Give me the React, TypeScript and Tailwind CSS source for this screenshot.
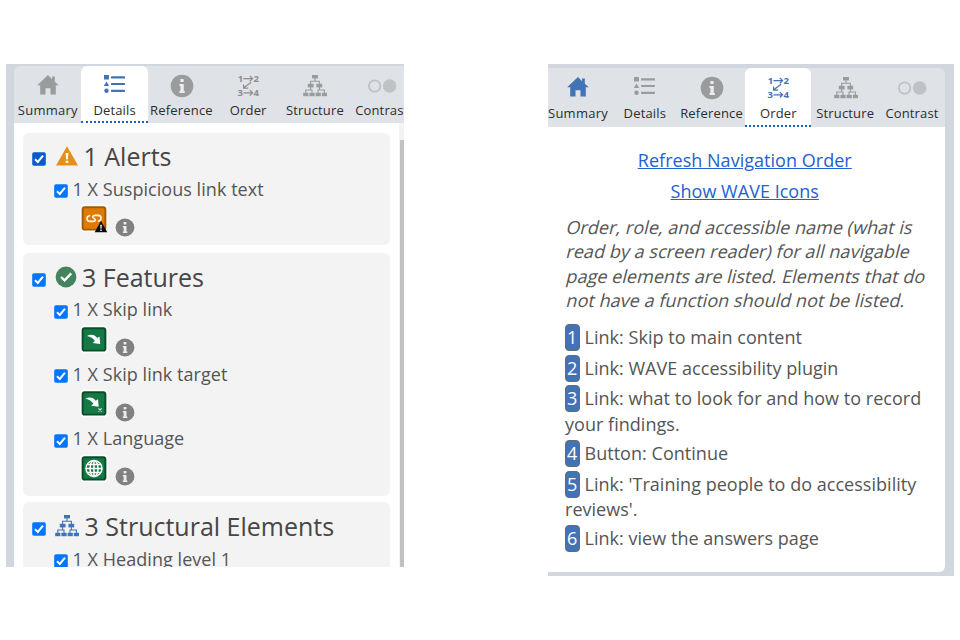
import React from "react";

type TabName = "Summary" | "Details" | "Reference" | "Order" | "Structure" | "Contrast";

function HomeIcon() {
  return (
    <svg width="24" height="24" viewBox="0 0 24 24" fill="currentColor">
      <path d="M12 1 1.2 11.3h3V20.5h5.3v-6.2h5v6.2h5.3v-9.2h3L18.8 7.7V2.6h-2.7v2.6z" />
    </svg>
  );
}

function DetailsIcon() {
  return (
    <svg width="24" height="24" viewBox="0 0 24 24" fill="currentColor">
      <rect x="1" y="1" width="4.9" height="4.5" />
      <path d="M3.5 7.500 6.200 12H.8z" />
      <circle cx="3.5" cy="16.7" r="2.2" />
      <rect x="8" y="2.3" width="14" height="2.2" rx=".6" />
      <rect x="8" y="8.9" width="14" height="2.2" rx=".6" />
      <rect x="8" y="15.7" width="14" height="2.2" rx=".6" />
    </svg>
  );
}

function InfoIcon({ className = "", w = 24, h = 24 }: { className?: string; w?: number; h?: number }) {
  return (
    <svg className={className} width={w} height={h} viewBox="0 0 24 24" preserveAspectRatio="none">
      <circle cx="12" cy="12" r="11.3" fill="currentColor" />
      <g fill="#ececec">
        <rect x="10.3" y="5" width="3.4" height="3.1" rx=".8" />
        <path d="M9.4 10h4.4v7h1v1.9H9.4V17h1v-5.1h-1z" />
      </g>
    </svg>
  );
}

function OrderIcon() {
  return (
    <svg width="24" height="24" viewBox="0 0 24 24" className="overflow-visible">
      <g fill="currentColor" className="font-['Open_Sans'] text-[9.5px] font-bold">
        <text x="0.8" y="8">1</text>
        <text x="16.4" y="8">2</text>
        <text x="0.6" y="22.2">3</text>
        <text x="16.4" y="22.2">4</text>
      </g>
      <g fill="none" stroke="currentColor" strokeWidth="1.2">
        <path d="M6.400 4.600h9M12.800 1.900l2.800 2.700-2.800 2.700M6.400 18.800h9M12.800 16.100l2.800 2.700-2.800 2.700M14.200 8.200 6.400 14M6.600 10.400v3.800h4.600" />
      </g>
    </svg>
  );
}

function StructureIcon() {
  return (
    <svg width="24" height="24" viewBox="0 0 24 24" fill="currentColor">
      <rect x="9" y="1" width="6" height="3.4" />
      <rect x="4.8" y="9.8" width="5.8" height="3.6" />
      <rect x="13.4" y="9.8" width="5.8" height="3.6" />
      <rect x="0.2" y="18.8" width="5.2" height="3.4" />
      <rect x="6.4" y="18.8" width="5.2" height="3.4" />
      <rect x="12.6" y="18.8" width="5.2" height="3.4" />
      <rect x="18.8" y="18.8" width="5.2" height="3.4" />
      <path
        d="M12 4v3.2M7.6 10V7.2h8.8V10M7.6 13v3M2.8 19v-3H9v3M16.4 13v3M15 19v-3h6.4v3"
        fill="none"
        stroke="currentColor"
        strokeWidth="1.1"
      />
    </svg>
  );
}

function ContrastIcon() {
  return (
    <svg width="30" height="24" viewBox="0 0 30 24">
      <circle cx="7.6" cy="12" r="5.7" fill="none" stroke="currentColor" strokeWidth="1.7" />
      <circle cx="22.6" cy="12" r="6.7" fill="currentColor" />
    </svg>
  );
}

const TABS: { name: TabName; icon: React.ReactNode; tone: string; track: string }[] = [
  { name: "Summary", icon: <HomeIcon />, tone: "text-[#999b9d]", track: "tracking-[0.25px]" },
  { name: "Details", icon: <DetailsIcon />, tone: "text-[#999b9d]", track: "tracking-[0.15px]" },
  { name: "Reference", icon: <InfoIcon />, tone: "text-[#999b9d]", track: "tracking-[0.2px]" },
  { name: "Order", icon: <OrderIcon />, tone: "text-[#8b8d90]", track: "tracking-[0.15px]" },
  { name: "Structure", icon: <StructureIcon />, tone: "text-[#999b9d]", track: "tracking-[0.15px]" },
  { name: "Contrast", icon: <ContrastIcon />, tone: "text-[#bfc1c4]", track: "tracking-[0.15px]" },
];

function TabBar({ active, blue, className, labelGap }: { active: TabName; blue: TabName[]; className: string; labelGap: string }) {
  return (
    <nav className={`flex shrink-0 bg-[#dfe2e7] ${className}`}>
      {TABS.map((t) => (
        <div
          key={t.name}
          className={`flex w-[66.8px] shrink-0 flex-col items-center border-b-2 pt-2 ${
            t.name === active ? "rounded-t-md border-dotted border-[#1a5fc4] bg-white" : "border-transparent"
          }`}
        >
          <span className={`pl-[1.6px] ${blue.includes(t.name) ? "text-[#4173b5]" : t.tone}`}>{t.icon}</span>
          <span className={`pl-[0.8px] text-[13px] leading-[18px] whitespace-nowrap text-[#2d2d2d] ${labelGap} ${t.track}`}>
            {t.name}
          </span>
        </div>
      ))}
    </nav>
  );
}

function Check({ dark = false }: { dark?: boolean }) {
  return (
    <svg width="14" height="14" viewBox="0 0 14 14" className="shrink-0">
      <rect x=".2" y=".2" width="13.600" height="13.600" rx="1.800" fill={dark ? "#0a5bc8" : "#0075ff"} />
      <path d="M3 7.3 5.8 10 11 3.6" fill="none" stroke="#fff" strokeWidth="2" />
    </svg>
  );
}

function Heading({ icon, text, dark, gap }: { icon: React.ReactNode; text: string; dark?: boolean; gap: string }) {
  return (
    <div className="flex h-9 items-center pl-[8.5px]">
      <span className="mt-1.5">
        <Check dark={dark} />
      </span>
      <span className="ml-[9.5px] shrink-0">{icon}</span>
      <h2 className={`text-[25px] leading-9 whitespace-nowrap text-[#464646] ${gap}`}>{text}</h2>
    </div>
  );
}

function Item({ text, icon }: { text: string; icon?: React.ReactNode }) {
  return (
    <div>
      <div className="flex h-[30px] items-center pl-[31px]">
        <span className="mt-1">
          <Check />
        </span>
        <span className="ml-[4.5px] text-[18px] leading-[29px] tracking-[0.05px] whitespace-nowrap text-[#555]">{text}</span>
      </div>
      {icon && (
        <div className="flex h-[34.5px] items-start pl-[57px]">
          {icon}
          <InfoIcon className="mt-[13.5px] ml-[6.5px] text-[#808080]" w={20} h={19} />
        </div>
      )}
    </div>
  );
}

function Tile({ fill, edge, children }: { fill: string; edge: string; children: React.ReactNode }) {
  return (
    <svg width="28" height="30" viewBox="0 0 28 30">
      <rect x="0.5" y="0.6" width="27" height="27.600" rx="4" fill="#fff" opacity=".9" />
      <rect x="2.6" y="3.2" width="22.8" height="22.4" rx="2.2" fill={fill} stroke={edge} strokeWidth="1.9" />
      {children}
    </svg>
  );
}

const arrow = "M7 11c3.400-2.300 8-1.600 10.300 2l2.200-1.600.7 7.600-7.600-1 2.300-2c-1.600-2.600-4.400-4.200-7.900-5z";

const LinkTile = (
  <Tile fill="#df7b04" edge="#a35a07">
    <g fill="none" stroke="#fff5e6" strokeWidth="1.6" strokeLinecap="round">
      <path d="M18 11.400h-2.800c-2.800 0-3.400 1.800-1.200 3s1.600 3-1.200 3H10c-4 0-4-5.200-.4-5.700" />
      <path d="M18 11.400c4 0 4 5.200.4 5.700" />
    </g>
    <path d="M21 16.800 27.300 28.300H14.700z" fill="#0b0b0b" />
    <path d="M20.200 20.800h1.600l-.3 4h-1zM20.300 25.600h1.400v1.400h-1.400z" fill="#fff" />
  </Tile>
);
const SkipTile = (
  <Tile fill="#157946" edge="#054f28">
    <path d={arrow} fill="#fff" />
  </Tile>
);
const TargetTile = (
  <Tile fill="#157946" edge="#054f28">
    <path d={arrow} fill="#fff" transform="translate(-1.5 -1.2)" />
    <path d="m18.500 19.400 3.200 3.200m0-3.200-3.200 3.200" stroke="#d5ebdf" strokeWidth="1.1" />
  </Tile>
);
const GlobeTile = (
  <Tile fill="#157946" edge="#054f28">
    <g fill="none" stroke="#fff" strokeWidth="1.5">
      <circle cx="14" cy="14.400" r="8" />
      <ellipse cx="14" cy="14.400" rx="4" ry="8" />
      <path d="M14 6.400v16M6 14.400h16M7.200 10.400h13.600M7.200 18.400h13.600" />
    </g>
  </Tile>
);

function LeftPanel() {
  return (
    <section className="mt-16 ml-1.5 flex h-[503px] w-[398px] flex-col overflow-hidden border-t-2 border-l-8 border-[#d2d7df] bg-white">
      <div className="bg-[#d2d7df]">
        <TabBar active="Details" blue={["Details"]} labelGap="mt-[3px]" className="h-[57px] w-[402px] rounded-tl-md" />
      </div>
      <div className="flex min-h-0 flex-1 justify-between">
        <div className="flex w-[366px] flex-col pt-[10px] pl-[9px]">
          <div className="h-[112px] w-[366.5px] shrink-0 rounded-md bg-[#f3f3f3] pt-[5px]">
            <Heading
              dark
              text="1 Alerts"
              gap="ml-[4.5px]"
              icon={
                <svg width="24" height="22" viewBox="0 0 24 22">
                  <path d="M12 1.300 23 20.500H1z" fill="#e58e1a" />
                  <path d="M10.600 8h2.800l-.6 6.500h-1.600zM10.700 15.800h2.600v2.300h-2.600z" fill="#fff" />
                </svg>
              }
            />
            <Item text="1 X Suspicious link text" icon={LinkTile} />
          </div>
          <div className="mt-[7.5px] h-[243px] w-[366.5px] shrink-0 rounded-md bg-[#f3f3f3] pt-[6px]">
            <Heading
              text="3 Features"
              gap="ml-[5px]"
              icon={
                <svg width="22" height="22" viewBox="0 0 22 22">
                  <circle cx="11" cy="11" r="10.400" fill="#43845f" />
                  <path d="m6 11 3.600 3.400 6.600-7" fill="none" stroke="#fff" strokeWidth="2.300" />
                </svg>
              }
            />
            <div>
              <Item text="1 X Skip link" icon={SkipTile} />
              <Item text="1 X Skip link target" icon={TargetTile} />
              <Item text="1 X Language" icon={GlobeTile} />
            </div>
          </div>
          <div className="mt-[6.5px] h-[90px] w-[366.5px] shrink-0 rounded-t-md bg-[#f3f3f3] pt-[6px]">
            <Heading
              text="3 Structural Elements"
              gap="ml-[5.5px]"
              icon={
                <span className="text-[#4173b5]">
                  <StructureIcon />
                </span>
              }
            />
            <Item text="1 X Heading level 1" />
          </div>
        </div>
        <div className="w-[5px] bg-[#f3f3f3] pt-[17px] pl-px">
          <div className="h-[430px] w-1 bg-[#c1c1c1]" />
        </div>
      </div>
    </section>
  );
}

const LINES: { n?: number; text: string; h: string }[] = [
  { n: 1, text: "Link: Skip to main content", h: "h-[31px]" },
  { n: 2, text: "Link: WAVE accessibility plugin", h: "h-[31px]" },
  { n: 3, text: "Link: what to look for and how to record", h: "h-[29px]" },
  { text: "your findings.", h: "h-[22px]" },
  { n: 4, text: "Button: Continue", h: "h-[36px]" },
  { n: 5, text: "Link: 'Training people to do accessibility", h: "h-[26px]" },
  { text: "reviews'.", h: "h-[24px]" },
  { n: 6, text: "Link: view the answers page", h: "h-[34px]" },
];

const INTRO = [
  "Order, role, and accessible name (what is",
  "read by a screen reader) for all navigable",
  "page elements are listed. Elements that do",
  "not have a function should not be listed.",
];

function RightPanel() {
  return (
    <section className="mt-16 ml-36 flex h-[512px] w-[406px] flex-col overflow-hidden border-t-4 border-r-9 border-b-4 border-[#d2d7df] bg-[#d2d7df]">
      <TabBar
        active="Order"
        blue={["Summary", "Order"]}
        labelGap="mt-[4px]"
        className="-ml-[3.8px] h-[58.5px] w-[400.8px] rounded-tr-md"
      />
      <div className="flex min-h-0 flex-1 flex-col rounded-br-md bg-white pt-[18px] pl-[17px] text-[18px] text-[#555]">
        <div className="mr-[20.5px] flex flex-col items-center tracking-[0.03px] text-[#2560cf]">
          <a className="h-[31px] leading-[31px] underline">Refresh Navigation Order</a>
          <a className="h-[31px] leading-[31px] underline">Show WAVE Icons</a>
        </div>
        <p className="mt-[8px] pl-[2px] leading-[24.6px] tracking-[0.04px] whitespace-nowrap">
          {INTRO.map((line) => (
            <span key={line} className="block w-fit -skew-x-14">
              {line}
            </span>
          ))}
        </p>
        <div className="mt-[9.6px] flex flex-col">
          {LINES.map((l) => (
            <div key={l.text} className={`flex items-center tracking-[0.03px] whitespace-nowrap ${l.h}`}>
              {l.n && (
                <span className="mr-[5px] flex h-[27px] w-[14.5px] shrink-0 items-center justify-center rounded-[4px] border border-[#666b73] bg-[#4273b6] text-white">
                  {l.n}
                </span>
              )}
              <span>{l.text}</span>
            </div>
          ))}
        </div>
      </div>
    </section>
  );
}

export default function App() {
  return (
    <main className="flex h-[640px] w-[960px] items-start overflow-hidden bg-white font-['Open_Sans','Noto_Sans',sans-serif]">
      <LeftPanel />
      <RightPanel />
    </main>
  );
}
